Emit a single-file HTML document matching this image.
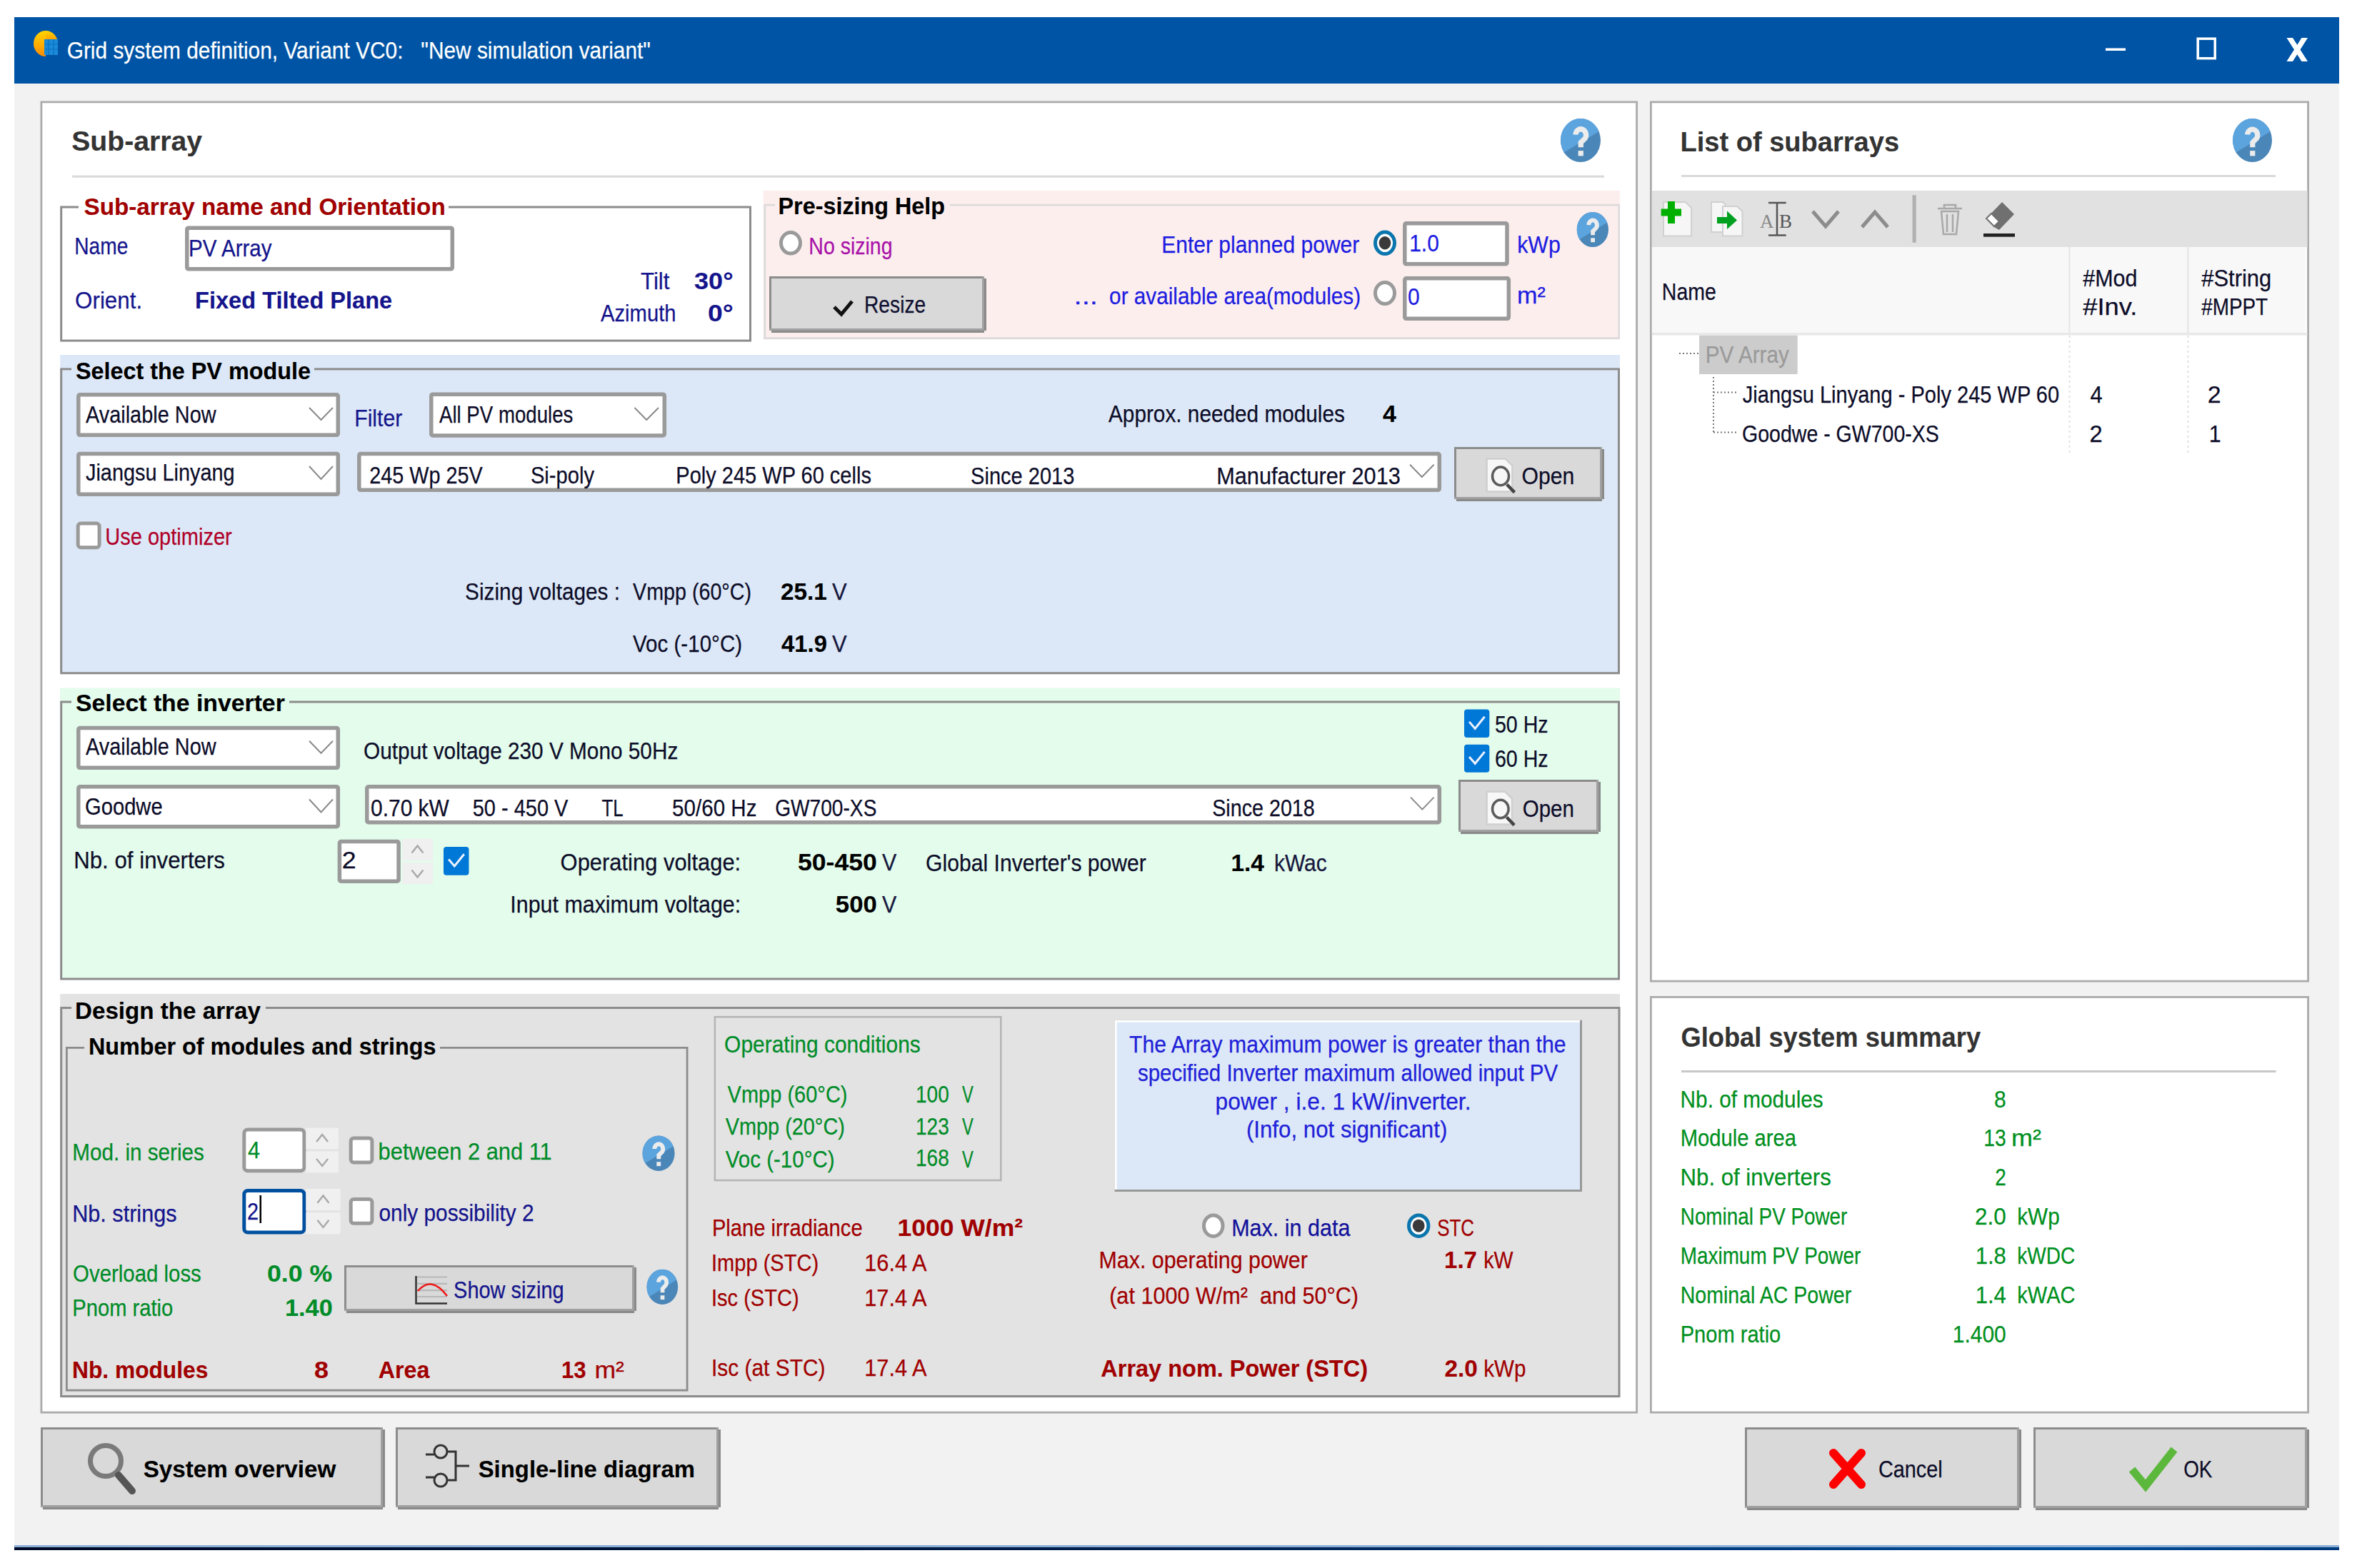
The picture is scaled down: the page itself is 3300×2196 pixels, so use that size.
<!DOCTYPE html>
<html><head><meta charset="utf-8"><title>Grid system definition</title>
<style>
html,body{margin:0;padding:0;background:#fff;width:3300px;height:2196px;overflow:hidden}
svg{display:block}
text{font-family:"Liberation Sans",sans-serif;white-space:pre}
</style></head><body>
<svg width="3300" height="2196" viewBox="0 0 3300 2196">
<rect x="0.0" y="0.0" width="3300.0" height="2196.0" rx="0" fill="#ffffff" />
<rect x="20.0" y="24.0" width="3255.0" height="2142.0" rx="0" fill="#f2f2f2" />
<defs><linearGradient id="bg1" x1="0" y1="0" x2="1" y2="0"><stop offset="0" stop-color="#000a28"/><stop offset="0.5" stop-color="#00204f"/><stop offset="0.88" stop-color="#004c98"/><stop offset="1" stop-color="#003a7a"/></linearGradient></defs>
<rect x="20.0" y="2164.0" width="3255.0" height="3.0" rx="0" fill="#8aaed6" />
<rect x="20.0" y="2167.0" width="3255.0" height="4.0" rx="0" fill="url(#bg1)" />
<rect x="20.0" y="24.0" width="3255.0" height="93.0" rx="0" fill="#0054a5" />
<defs><linearGradient id="ig" x1="0" y1="0" x2="0" y2="1"><stop offset="0" stop-color="#ffd400"/><stop offset="1" stop-color="#ff8c00"/></linearGradient></defs>
<path d="M 64 43 A 17 18 0 1 0 64 79 L 64 61 Z" fill="url(#ig)"/>
<path d="M 64 43 A 17 18 0 0 1 81 61 L 64 61 Z" fill="url(#ig)"/>
<rect x="62" y="55" width="19" height="22" fill="#1a8ad8"/>
<path d="M62 62 H81 M62 69 H81 M68 55 V77 M75 55 V77" stroke="#0a70c0" stroke-width="1.2"/>
<text x="93.7" y="82.0" font-size="34" fill="#ffffff" stroke="#ffffff" stroke-width="0.25" textLength="817.2" lengthAdjust="spacingAndGlyphs">Grid system definition, Variant VC0:   &quot;New simulation variant&quot;</text>
<rect x="2948.0" y="67.5" width="28.0" height="3.5" rx="0" fill="#fff" />
<rect x="3077.2" y="54.2" width="24.0" height="27.5" rx="0" fill="none" stroke="#fff" stroke-width="3.5" />
<path d="M3201.5 53 H3210 L3231 86 H3222.5 Z M3222.5 53 H3231 L3210 86 H3201.5 Z" fill="#fff"/>
<rect x="57.9" y="142.9" width="2233.7" height="1835.2" rx="0" fill="#fff" stroke="#ababab" stroke-width="2.8" />
<text x="100.2" y="211.4" font-size="38" fill="#333333" stroke="#333333" stroke-width="0.15" font-weight="bold" textLength="182.8" lengthAdjust="spacingAndGlyphs">Sub-array</text>
<g><clipPath id="hc2185_166"><ellipse cx="2213.0" cy="196.5" rx="28.0" ry="30.5"/></clipPath><ellipse cx="2213.0" cy="196.5" rx="28.0" ry="30.5" fill="#4a86b8"/><polygon clip-path="url(#hc2185_166)" points="2185,166 2241,166 2241,182.775 2185,216.325" fill="#5ca4de"/></g>
<path d="M 2206.0 188.7 A 7.3 8.3 0 1 1 2219.3 193.8 L 2213.3 199.6 L 2213.3 206.3" fill="none" stroke="#ececec" stroke-width="7.3"/>
<rect x="2209.6" y="211.1" width="7.3" height="7.3" fill="#ececec"/>
<rect x="101.0" y="245.6" width="2145.0" height="3.1" rx="0" fill="#d9d9d9" />
<rect x="85.7" y="290.0" width="964.8" height="187.1" rx="0" fill="none" stroke="#8c8c8c" stroke-width="3" />
<rect x="110.0" y="287.5" width="518.0" height="5.0" rx="0" fill="#fff" />
<text x="117.5" y="301.0" font-size="34" fill="#a00000" stroke="#a00000" stroke-width="0.15" font-weight="bold" textLength="506.2" lengthAdjust="spacingAndGlyphs">Sub-array name and Orientation</text>
<text x="104.3" y="355.7" font-size="34" fill="#14148c" stroke="#14148c" stroke-width="0.25" textLength="75.0" lengthAdjust="spacingAndGlyphs">Name</text>
<rect x="261.8" y="319.2" width="371.5" height="57.6" rx="2" fill="#fff" stroke="#9a9a9a" stroke-width="5.5" />
<text x="264.0" y="358.6" font-size="34" fill="#14148c" stroke="#14148c" stroke-width="0.25" textLength="116.5" lengthAdjust="spacingAndGlyphs">PV Array</text>
<text x="105.1" y="432.0" font-size="34" fill="#14148c" stroke="#14148c" stroke-width="0.25" textLength="94.0" lengthAdjust="spacingAndGlyphs">Orient.</text>
<text x="273.1" y="431.6" font-size="34" fill="#14148c" stroke="#14148c" stroke-width="0.15" font-weight="bold" textLength="276.1" lengthAdjust="spacingAndGlyphs">Fixed Tilted Plane</text>
<text x="897.0" y="404.7" font-size="34" fill="#14148c" stroke="#14148c" stroke-width="0.25" textLength="40.5" lengthAdjust="spacingAndGlyphs">Tilt</text>
<text x="972.0" y="404.7" font-size="34" fill="#14148c" stroke="#14148c" stroke-width="0.15" font-weight="bold" textLength="54.6" lengthAdjust="spacingAndGlyphs">30°</text>
<text x="841.0" y="450.0" font-size="34" fill="#14148c" stroke="#14148c" stroke-width="0.25" textLength="105.6" lengthAdjust="spacingAndGlyphs">Azimuth</text>
<text x="990.9" y="450.0" font-size="34" fill="#14148c" stroke="#14148c" stroke-width="0.15" font-weight="bold" textLength="35.8" lengthAdjust="spacingAndGlyphs">0°</text>
<rect x="1068.5" y="267.0" width="1199.5" height="208.5" rx="0" fill="#fdeeee" />
<rect x="1070.8" y="287.2" width="1195.9" height="186.5" rx="0" fill="none" stroke="#dadada" stroke-width="2.6" />
<rect x="1085.0" y="284.9" width="245.0" height="4.6" rx="0" fill="#fdeeee" />
<text x="1089.5" y="300.3" font-size="34" fill="#000" stroke="#000" stroke-width="0.15" font-weight="bold" textLength="233.6" lengthAdjust="spacingAndGlyphs">Pre-sizing Help</text>
<ellipse cx="1107.0" cy="340.3" rx="13.5" ry="14.800000000000011" fill="#fff" stroke="#9a9a9a" stroke-width="5"/>
<text x="1132.3" y="355.5" font-size="34" fill="#a812a8" stroke="#a812a8" stroke-width="0.25" textLength="117.3" lengthAdjust="spacingAndGlyphs">No sizing</text>
<rect x="1378.0" y="390.0" width="3.0" height="73.0" rx="0" fill="#8a8a8a" />
<rect x="1080.0" y="463.0" width="298.0" height="3.0" rx="0" fill="#8a8a8a" />
<rect x="1077.0" y="387.0" width="301.0" height="76.0" rx="0" fill="#a0a0a0" />
<rect x="1077.0" y="387.0" width="298.0" height="73.0" rx="0" fill="#8c8c8c" />
<rect x="1080.0" y="390.0" width="295.0" height="70.0" rx="0" fill="#d9d9d9" />
<path d="M1168 430 L1178 440 L1193 422" fill="none" stroke="#111" stroke-width="5"/>
<text x="1210.0" y="438.0" font-size="34" fill="#101030" stroke="#101030" stroke-width="0.25" textLength="86.2" lengthAdjust="spacingAndGlyphs">Resize</text>
<text x="1626.2" y="354.0" font-size="34" fill="#1c1ce0" stroke="#1c1ce0" stroke-width="0.25" textLength="277.1" lengthAdjust="spacingAndGlyphs">Enter planned power</text>
<ellipse cx="1939.0" cy="340.3" rx="13.5" ry="15.199999999999989" fill="#fff" stroke="#0b76ad" stroke-width="5"/>
<ellipse cx="1939.0" cy="340.3" rx="8.32" ry="9.203999999999994" fill="#3a3a3a"/>
<rect x="1966.8" y="312.8" width="143.2" height="57.0" rx="2" fill="#fff" stroke="#9a9a9a" stroke-width="5.5" />
<text x="1973.2" y="352.0" font-size="34" fill="#1c1ce0" stroke="#1c1ce0" stroke-width="0.25" textLength="41.6" lengthAdjust="spacingAndGlyphs">1.0</text>
<text x="2124.2" y="354.0" font-size="34" fill="#1c1ce0" stroke="#1c1ce0" stroke-width="0.25" textLength="60.6" lengthAdjust="spacingAndGlyphs">kWp</text>
<g><clipPath id="hc2207_297"><ellipse cx="2229.85" cy="321.5" rx="22.15000000000009" ry="24.5"/></clipPath><ellipse cx="2229.85" cy="321.5" rx="22.15000000000009" ry="24.5" fill="#4a86b8"/><polygon clip-path="url(#hc2207_297)" points="2207.7,297 2252,297 2252,310.475 2207.7,337.425" fill="#5ca4de"/></g>
<path d="M 2224.3 315.1 A 5.8 6.8 0 1 1 2234.8 319.2 L 2230.1 323.9 L 2230.1 329.3" fill="none" stroke="#ececec" stroke-width="5.8"/>
<rect x="2227.2" y="333.3" width="5.8" height="5.9" fill="#ececec"/>
<text x="1503.5" y="425.5" font-size="34" fill="#1c1ce0" stroke="#1c1ce0" stroke-width="0.25" textLength="33.4" lengthAdjust="spacingAndGlyphs">...</text>
<text x="1553.1" y="425.5" font-size="34" fill="#1c1ce0" stroke="#1c1ce0" stroke-width="0.25" textLength="352.0" lengthAdjust="spacingAndGlyphs">or available area(modules)</text>
<ellipse cx="1939.0" cy="410.5" rx="13.5" ry="15.0" fill="#fff" stroke="#9a9a9a" stroke-width="5"/>
<rect x="1966.8" y="389.8" width="145.5" height="56.5" rx="2" fill="#fff" stroke="#9a9a9a" stroke-width="5.5" />
<text x="1971.1" y="427.0" font-size="34" fill="#1c1ce0" stroke="#1c1ce0" stroke-width="0.25" textLength="16.7" lengthAdjust="spacingAndGlyphs">0</text>
<text x="2124.0" y="425.0" font-size="34" fill="#1c1ce0" stroke="#1c1ce0" stroke-width="0.25" textLength="39.9" lengthAdjust="spacingAndGlyphs">m²</text>
<rect x="84.2" y="497.0" width="2183.8" height="444.5" rx="0" fill="#dce8f7" />
<rect x="85.7" y="516.9" width="2180.8" height="425.8" rx="0" fill="none" stroke="#8c8c8c" stroke-width="3" />
<rect x="100.0" y="514.4" width="340.0" height="5.0" rx="0" fill="#dce8f7" />
<text x="106.0" y="530.5" font-size="34" fill="#000" stroke="#000" stroke-width="0.15" font-weight="bold" textLength="328.9" lengthAdjust="spacingAndGlyphs">Select the PV module</text>
<rect x="109.8" y="552.8" width="363.5" height="56.5" rx="2" fill="#fff" stroke="#9a9a9a" stroke-width="5.5" />
<polyline points="433,571 449.5,588 466,571" fill="none" stroke="#8a8a8a" stroke-width="2"/>
<text x="120.0" y="592.0" font-size="34" fill="#0c0c28" stroke="#0c0c28" stroke-width="0.25" textLength="182.6" lengthAdjust="spacingAndGlyphs">Available Now</text>
<text x="496.2" y="597.0" font-size="34" fill="#14148c" stroke="#14148c" stroke-width="0.25" textLength="67.1" lengthAdjust="spacingAndGlyphs">Filter</text>
<rect x="603.8" y="552.2" width="326.5" height="57.8" rx="2" fill="#fff" stroke="#9a9a9a" stroke-width="5.5" />
<polyline points="888.5,571 905.25,588 922,571" fill="none" stroke="#8a8a8a" stroke-width="2"/>
<text x="615.0" y="592.0" font-size="34" fill="#0c0c28" stroke="#0c0c28" stroke-width="0.25" textLength="187.3" lengthAdjust="spacingAndGlyphs">All PV modules</text>
<text x="1552.0" y="591.0" font-size="34" fill="#0c0c28" stroke="#0c0c28" stroke-width="0.25" textLength="330.9" lengthAdjust="spacingAndGlyphs">Approx. needed modules</text>
<text x="1936.0" y="591.0" font-size="34" fill="#000" stroke="#000" stroke-width="0.15" font-weight="bold" textLength="18.9" lengthAdjust="spacingAndGlyphs">4</text>
<rect x="109.8" y="635.4" width="363.5" height="56.9" rx="2" fill="#fff" stroke="#9a9a9a" stroke-width="5.5" />
<polyline points="433,653 449.5,671 466,653" fill="none" stroke="#8a8a8a" stroke-width="2"/>
<text x="120.0" y="673.3" font-size="34" fill="#0c0c28" stroke="#0c0c28" stroke-width="0.25" textLength="208.6" lengthAdjust="spacingAndGlyphs">Jiangsu Linyang</text>
<rect x="502.8" y="635.5" width="1512.5" height="50.8" rx="2" fill="#fff" stroke="#9a9a9a" stroke-width="5.5" />
<polyline points="1974,650.7 1990.8,668 2007.6,650.7" fill="none" stroke="#8a8a8a" stroke-width="2"/>
<text x="517.2" y="677.0" font-size="34" fill="#0c0c28" stroke="#0c0c28" stroke-width="0.25" textLength="158.6" lengthAdjust="spacingAndGlyphs">245 Wp 25V</text>
<text x="742.9" y="677.0" font-size="34" fill="#0c0c28" stroke="#0c0c28" stroke-width="0.25" textLength="89.1" lengthAdjust="spacingAndGlyphs">Si-poly</text>
<text x="946.3" y="677.0" font-size="34" fill="#0c0c28" stroke="#0c0c28" stroke-width="0.25" textLength="273.6" lengthAdjust="spacingAndGlyphs">Poly 245 WP 60 cells</text>
<text x="1359.1" y="677.6" font-size="34" fill="#0c0c28" stroke="#0c0c28" stroke-width="0.25" textLength="145.3" lengthAdjust="spacingAndGlyphs">Since 2013</text>
<text x="1703.2" y="677.6" font-size="34" fill="#0c0c28" stroke="#0c0c28" stroke-width="0.25" textLength="257.6" lengthAdjust="spacingAndGlyphs">Manufacturer 2013</text>
<rect x="2243.0" y="629.0" width="3.0" height="70.0" rx="0" fill="#8a8a8a" />
<rect x="2039.0" y="699.0" width="204.0" height="3.0" rx="0" fill="#8a8a8a" />
<rect x="2036.0" y="626.0" width="207.0" height="73.0" rx="0" fill="#a0a0a0" />
<rect x="2036.0" y="626.0" width="204.0" height="70.0" rx="0" fill="#8c8c8c" />
<rect x="2039.0" y="629.0" width="201.0" height="67.0" rx="0" fill="#d9d9d9" />
<path d="M 2081.6 642.4 H 2107.6 L 2117.4 652.2 V 688.4 H 2081.6 Z" fill="#f7f7f7" stroke="#cfcfcf" stroke-width="2.5"/>
<ellipse cx="2101.0" cy="666.9" rx="11.5" ry="12.8" fill="none" stroke="#5c5c5c" stroke-width="3.5"/>
<line x1="2109.8" y1="678.5" x2="2120.5" y2="689.6" stroke="#444" stroke-width="4.5"/>
<text x="2130.6" y="677.6" font-size="34" fill="#0c0c28" stroke="#0c0c28" stroke-width="0.25" textLength="73.8" lengthAdjust="spacingAndGlyphs">Open</text>
<rect x="109.2" y="733.0" width="29.9" height="33.7" rx="4" fill="#fff" stroke="#9a9a9a" stroke-width="5" />
<text x="147.3" y="763.0" font-size="34" fill="#b00028" stroke="#b00028" stroke-width="0.25" textLength="177.4" lengthAdjust="spacingAndGlyphs">Use optimizer</text>
<text x="651.1" y="840.0" font-size="34" fill="#0c0c28" stroke="#0c0c28" stroke-width="0.25" textLength="217.0" lengthAdjust="spacingAndGlyphs">Sizing voltages :</text>
<text x="886.0" y="840.0" font-size="34" fill="#0c0c28" stroke="#0c0c28" stroke-width="0.25" textLength="166.1" lengthAdjust="spacingAndGlyphs">Vmpp (60°C)</text>
<text x="1093.0" y="840.0" font-size="34" fill="#000" stroke="#000" stroke-width="0.15" font-weight="bold" textLength="64.9" lengthAdjust="spacingAndGlyphs">25.1</text>
<text x="1165.0" y="840.0" font-size="34" fill="#16163c" stroke="#16163c" stroke-width="0.25" textLength="20.7" lengthAdjust="spacingAndGlyphs">V</text>
<text x="886.0" y="913.0" font-size="34" fill="#0c0c28" stroke="#0c0c28" stroke-width="0.25" textLength="153.1" lengthAdjust="spacingAndGlyphs">Voc (-10°C)</text>
<text x="1094.0" y="913.0" font-size="34" fill="#000" stroke="#000" stroke-width="0.15" font-weight="bold" textLength="63.9" lengthAdjust="spacingAndGlyphs">41.9</text>
<text x="1165.0" y="913.0" font-size="34" fill="#16163c" stroke="#16163c" stroke-width="0.25" textLength="20.7" lengthAdjust="spacingAndGlyphs">V</text>
<rect x="84.2" y="963.5" width="2183.8" height="406.5" rx="0" fill="#e3fcec" />
<rect x="85.7" y="983.0" width="2180.8" height="388.0" rx="0" fill="none" stroke="#8c8c8c" stroke-width="3" />
<rect x="100.0" y="980.5" width="305.0" height="5.0" rx="0" fill="#e3fcec" />
<text x="106.0" y="996.0" font-size="34" fill="#000" stroke="#000" stroke-width="0.15" font-weight="bold" textLength="292.8" lengthAdjust="spacingAndGlyphs">Select the inverter</text>
<rect x="109.8" y="1019.5" width="363.5" height="55.8" rx="2" fill="#fff" stroke="#9a9a9a" stroke-width="5.5" />
<polyline points="433,1037.7 449.5,1054.7 466,1037.7" fill="none" stroke="#8a8a8a" stroke-width="2"/>
<text x="120.0" y="1057.4" font-size="34" fill="#0c0c28" stroke="#0c0c28" stroke-width="0.25" textLength="182.6" lengthAdjust="spacingAndGlyphs">Available Now</text>
<text x="509.1" y="1062.8" font-size="34" fill="#0c0c28" stroke="#0c0c28" stroke-width="0.25" textLength="440.2" lengthAdjust="spacingAndGlyphs">Output voltage 230 V Mono 50Hz</text>
<rect x="2050.0" y="993.6" width="35.3" height="39.4" rx="4" fill="#0078d7" />
<polyline points="2057.1,1010.9 2065.2,1020.4 2078.6,1003.8" fill="none" stroke="#eef2ff" stroke-width="3"/>
<text x="2092.9" y="1025.8" font-size="34" fill="#0c0c28" stroke="#0c0c28" stroke-width="0.25" textLength="74.7" lengthAdjust="spacingAndGlyphs">50 Hz</text>
<rect x="2050.0" y="1042.8" width="35.3" height="39.0" rx="4" fill="#0078d7" />
<polyline points="2057.1,1060.0 2065.2,1069.3 2078.6,1052.9" fill="none" stroke="#eef2ff" stroke-width="3"/>
<text x="2092.9" y="1074.2" font-size="34" fill="#0c0c28" stroke="#0c0c28" stroke-width="0.25" textLength="74.7" lengthAdjust="spacingAndGlyphs">60 Hz</text>
<rect x="109.8" y="1101.8" width="363.5" height="55.9" rx="2" fill="#fff" stroke="#9a9a9a" stroke-width="5.5" />
<polyline points="433,1119.5 449.5,1137.5 466,1119.5" fill="none" stroke="#8a8a8a" stroke-width="2"/>
<text x="119.1" y="1141.0" font-size="34" fill="#0c0c28" stroke="#0c0c28" stroke-width="0.25" textLength="108.5" lengthAdjust="spacingAndGlyphs">Goodwe</text>
<rect x="513.8" y="1101.8" width="1501.5" height="49.9" rx="2" fill="#fff" stroke="#9a9a9a" stroke-width="5.5" />
<polyline points="1975,1116.6 1991.3,1133.6 2007.6,1116.6" fill="none" stroke="#8a8a8a" stroke-width="2"/>
<text x="519.1" y="1142.6" font-size="34" fill="#0c0c28" stroke="#0c0c28" stroke-width="0.25" textLength="109.7" lengthAdjust="spacingAndGlyphs">0.70 kW</text>
<text x="661.7" y="1142.6" font-size="34" fill="#0c0c28" stroke="#0c0c28" stroke-width="0.25" textLength="133.7" lengthAdjust="spacingAndGlyphs">50 - 450 V</text>
<text x="842.5" y="1142.6" font-size="34" fill="#0c0c28" stroke="#0c0c28" stroke-width="0.25" textLength="30.2" lengthAdjust="spacingAndGlyphs">TL</text>
<text x="941.1" y="1142.6" font-size="34" fill="#0c0c28" stroke="#0c0c28" stroke-width="0.25" textLength="118.4" lengthAdjust="spacingAndGlyphs">50/60 Hz</text>
<text x="1085.2" y="1142.6" font-size="34" fill="#0c0c28" stroke="#0c0c28" stroke-width="0.25" textLength="142.2" lengthAdjust="spacingAndGlyphs">GW700-XS</text>
<text x="1697.2" y="1142.5" font-size="34" fill="#0c0c28" stroke="#0c0c28" stroke-width="0.25" textLength="143.6" lengthAdjust="spacingAndGlyphs">Since 2018</text>
<rect x="2238.0" y="1095.0" width="3.0" height="70.0" rx="0" fill="#8a8a8a" />
<rect x="2045.0" y="1165.0" width="193.0" height="3.0" rx="0" fill="#8a8a8a" />
<rect x="2042.0" y="1092.0" width="196.0" height="73.0" rx="0" fill="#a0a0a0" />
<rect x="2042.0" y="1092.0" width="193.0" height="70.0" rx="0" fill="#8c8c8c" />
<rect x="2045.0" y="1095.0" width="190.0" height="67.0" rx="0" fill="#d9d9d9" />
<path d="M 2081.6 1108.7 H 2107.2 L 2117.0 1118.5 V 1154.4 H 2081.6 Z" fill="#f7f7f7" stroke="#cfcfcf" stroke-width="2.5"/>
<ellipse cx="2100.8" cy="1133.0" rx="11.3" ry="12.7" fill="none" stroke="#5c5c5c" stroke-width="3.5"/>
<line x1="2109.5" y1="1144.5" x2="2120.1" y2="1155.6" stroke="#444" stroke-width="4.5"/>
<text x="2131.8" y="1143.5" font-size="34" fill="#0c0c28" stroke="#0c0c28" stroke-width="0.25" textLength="72.1" lengthAdjust="spacingAndGlyphs">Open</text>
<text x="103.2" y="1216.0" font-size="34" fill="#0c0c28" stroke="#0c0c28" stroke-width="0.25" textLength="211.8" lengthAdjust="spacingAndGlyphs">Nb. of inverters</text>
<rect x="475.4" y="1178.5" width="82.7" height="55.7" rx="2" fill="#fff" stroke="#9a9a9a" stroke-width="5.5" />
<text x="478.7" y="1216.0" font-size="34" fill="#0c0c28" stroke="#0c0c28" stroke-width="0.25" textLength="19.9" lengthAdjust="spacingAndGlyphs">2</text>
<rect x="563.0" y="1175.0" width="43.0" height="30.0" rx="0" fill="#f0f0f0" />
<rect x="563.0" y="1208.0" width="43.0" height="30.0" rx="0" fill="#f0f0f0" />
<polyline points="576.5,1194.5 584.5,1184.5 592.5,1194.5" fill="none" stroke="#a8a8a8" stroke-width="2.4"/>
<polyline points="576.5,1218.5 584.5,1228.5 592.5,1218.5" fill="none" stroke="#a8a8a8" stroke-width="2.4"/>
<rect x="621.0" y="1186.0" width="35.5" height="39.7" rx="4" fill="#0078d7" />
<polyline points="628.1,1203.5 636.3,1213.0 649.8,1196.3" fill="none" stroke="#eef2ff" stroke-width="3"/>
<text x="784.6" y="1219.0" font-size="34" fill="#0c0c28" stroke="#0c0c28" stroke-width="0.25" textLength="252.6" lengthAdjust="spacingAndGlyphs">Operating voltage:</text>
<text x="1117.0" y="1219.0" font-size="34" fill="#000" stroke="#000" stroke-width="0.15" font-weight="bold" textLength="110.8" lengthAdjust="spacingAndGlyphs">50-450</text>
<text x="1235.0" y="1219.0" font-size="34" fill="#16163c" stroke="#16163c" stroke-width="0.25" textLength="20.3" lengthAdjust="spacingAndGlyphs">V</text>
<text x="1296.1" y="1219.7" font-size="34" fill="#0c0c28" stroke="#0c0c28" stroke-width="0.25" textLength="308.8" lengthAdjust="spacingAndGlyphs">Global Inverter&#x27;s power</text>
<text x="1723.5" y="1219.7" font-size="34" fill="#000" stroke="#000" stroke-width="0.15" font-weight="bold" textLength="46.4" lengthAdjust="spacingAndGlyphs">1.4</text>
<text x="1783.9" y="1219.7" font-size="34" fill="#16163c" stroke="#16163c" stroke-width="0.25" textLength="73.9" lengthAdjust="spacingAndGlyphs">kWac</text>
<text x="714.3" y="1277.7" font-size="34" fill="#0c0c28" stroke="#0c0c28" stroke-width="0.25" textLength="322.9" lengthAdjust="spacingAndGlyphs">Input maximum voltage:</text>
<text x="1169.8" y="1277.7" font-size="34" fill="#000" stroke="#000" stroke-width="0.15" font-weight="bold" textLength="58.0" lengthAdjust="spacingAndGlyphs">500</text>
<text x="1235.0" y="1277.7" font-size="34" fill="#16163c" stroke="#16163c" stroke-width="0.25" textLength="20.3" lengthAdjust="spacingAndGlyphs">V</text>
<rect x="84.2" y="1392.0" width="2183.8" height="565.5" rx="0" fill="#e3e3e3" />
<rect x="85.7" y="1411.5" width="2181.3" height="544.0" rx="0" fill="none" stroke="#8c8c8c" stroke-width="3" />
<rect x="100.0" y="1409.0" width="272.0" height="5.0" rx="0" fill="#e3e3e3" />
<text x="105.0" y="1427.0" font-size="34" fill="#000" stroke="#000" stroke-width="0.15" font-weight="bold" textLength="259.9" lengthAdjust="spacingAndGlyphs">Design the array</text>
<rect x="93.4" y="1467.4" width="868.7" height="479.7" rx="0" fill="none" stroke="#8c8c8c" stroke-width="2.8" />
<rect x="118.0" y="1465.0" width="498.0" height="4.8" rx="0" fill="#e3e3e3" />
<text x="123.9" y="1477.0" font-size="34" fill="#000" stroke="#000" stroke-width="0.15" font-weight="bold" textLength="486.6" lengthAdjust="spacingAndGlyphs">Number of modules and strings</text>
<text x="101.3" y="1624.5" font-size="34" fill="#008c28" stroke="#008c28" stroke-width="0.25" textLength="184.6" lengthAdjust="spacingAndGlyphs">Mod. in series</text>
<rect x="341.8" y="1582.1" width="84.1" height="57.7" rx="5" fill="#fff" stroke="#9a9a9a" stroke-width="5" />
<text x="347.0" y="1621.5" font-size="34" fill="#008c28" stroke="#008c28" stroke-width="0.25" textLength="17.1" lengthAdjust="spacingAndGlyphs">4</text>
<rect x="428.4" y="1579.6" width="45.4" height="29.8" rx="0" fill="#f0f0f0" />
<rect x="428.4" y="1612.4" width="45.4" height="29.9" rx="0" fill="#f0f0f0" />
<polyline points="443.1,1599.0 451.1,1589.0 459.1,1599.0" fill="none" stroke="#a8a8a8" stroke-width="2.4"/>
<polyline points="443.1,1622.9 451.1,1632.9 459.1,1622.9" fill="none" stroke="#a8a8a8" stroke-width="2.4"/>
<rect x="491.2" y="1593.9" width="29.7" height="34.1" rx="4" fill="#fff" stroke="#9a9a9a" stroke-width="5" />
<text x="529.6" y="1623.5" font-size="34" fill="#008c28" stroke="#008c28" stroke-width="0.25" textLength="243.2" lengthAdjust="spacingAndGlyphs">between 2 and 11</text>
<g><clipPath id="hc899_1590"><ellipse cx="922.05" cy="1615.3" rx="22.55000000000001" ry="24.700000000000045"/></clipPath><ellipse cx="922.05" cy="1615.3" rx="22.55000000000001" ry="24.700000000000045" fill="#4a86b8"/><polygon clip-path="url(#hc899_1590)" points="899.5,1590.6 944.6,1590.6 944.6,1604.185 899.5,1631.355" fill="#5ca4de"/></g>
<path d="M 916.4 1609.0 A 5.9 6.9 0 1 1 927.1 1613.1 L 922.3 1617.8 L 922.3 1623.2" fill="none" stroke="#ececec" stroke-width="5.9"/>
<rect x="919.3" y="1627.2" width="5.9" height="5.9" fill="#ececec"/>
<text x="101.2" y="1710.6" font-size="34" fill="#14148c" stroke="#14148c" stroke-width="0.25" textLength="146.3" lengthAdjust="spacingAndGlyphs">Nb. strings</text>
<rect x="341.8" y="1667.5" width="84.1" height="58.4" rx="5" fill="#fff" stroke="#0050a0" stroke-width="5" />
<text x="346.1" y="1708.0" font-size="34" fill="#14148c" stroke="#14148c" stroke-width="0.25" textLength="16.1" lengthAdjust="spacingAndGlyphs">2</text>
<rect x="363.5" y="1674.0" width="2.5" height="39.0" rx="0" fill="#000" />
<rect x="428.4" y="1665.0" width="48.1" height="30.2" rx="0" fill="#f0f0f0" />
<rect x="428.4" y="1698.2" width="48.1" height="30.2" rx="0" fill="#f0f0f0" />
<polyline points="444.45,1684.7 452.45,1674.5 460.45,1684.7" fill="none" stroke="#a8a8a8" stroke-width="2.4"/>
<polyline points="444.45,1708.7 452.45,1718.9 460.45,1708.7" fill="none" stroke="#a8a8a8" stroke-width="2.4"/>
<rect x="491.2" y="1679.5" width="29.7" height="33.8" rx="4" fill="#fff" stroke="#9a9a9a" stroke-width="5" />
<text x="530.5" y="1709.5" font-size="34" fill="#14148c" stroke="#14148c" stroke-width="0.25" textLength="217.1" lengthAdjust="spacingAndGlyphs">only possibility 2</text>
<text x="102.1" y="1795.0" font-size="34" fill="#008c28" stroke="#008c28" stroke-width="0.25" textLength="179.7" lengthAdjust="spacingAndGlyphs">Overload loss</text>
<text x="374.0" y="1795.0" font-size="34" fill="#008c28" stroke="#008c28" stroke-width="0.15" font-weight="bold" textLength="91.1" lengthAdjust="spacingAndGlyphs">0.0 %</text>
<text x="101.3" y="1843.4" font-size="34" fill="#008c28" stroke="#008c28" stroke-width="0.25" textLength="141.0" lengthAdjust="spacingAndGlyphs">Pnom ratio</text>
<text x="399.0" y="1843.4" font-size="34" fill="#008c28" stroke="#008c28" stroke-width="0.15" font-weight="bold" textLength="66.7" lengthAdjust="spacingAndGlyphs">1.40</text>
<rect x="888.0" y="1775.0" width="3.0" height="61.0" rx="0" fill="#8a8a8a" />
<rect x="485.0" y="1836.0" width="403.0" height="3.0" rx="0" fill="#8a8a8a" />
<rect x="482.0" y="1772.0" width="406.0" height="64.0" rx="0" fill="#a0a0a0" />
<rect x="482.0" y="1772.0" width="403.0" height="61.0" rx="0" fill="#8c8c8c" />
<rect x="485.0" y="1775.0" width="400.0" height="58.0" rx="0" fill="#d9d9d9" />
<path d="M584 1788.5 H626 M584 1797.8 H626 M584 1807.2 H626 M584 1816 H626" stroke="#b8b8b8" stroke-width="2.2"/>
<path d="M582.5 1787 V1825.5 H626" fill="none" stroke="#333" stroke-width="2.5"/>
<path d="M585 1808 Q604 1786 626 1815" fill="none" stroke="#f01818" stroke-width="2.5"/>
<text x="635.1" y="1818.0" font-size="34" fill="#14148c" stroke="#14148c" stroke-width="0.25" textLength="154.5" lengthAdjust="spacingAndGlyphs">Show sizing</text>
<g><clipPath id="hc905_1777"><ellipse cx="927.35" cy="1802.35" rx="21.850000000000023" ry="24.649999999999977"/></clipPath><ellipse cx="927.35" cy="1802.35" rx="21.850000000000023" ry="24.649999999999977" fill="#4a86b8"/><polygon clip-path="url(#hc905_1777)" points="905.5,1777.7 949.2,1777.7 949.2,1791.2575 905.5,1818.3725" fill="#5ca4de"/></g>
<path d="M 921.9 1795.7 A 5.7 6.7 0 1 1 932.3 1799.7 L 927.6 1804.8 L 927.6 1810.2" fill="none" stroke="#ececec" stroke-width="5.7"/>
<rect x="924.7" y="1814.2" width="5.7" height="5.9" fill="#ececec"/>
<text x="101.1" y="1930.4" font-size="34" fill="#a00000" stroke="#a00000" stroke-width="0.15" font-weight="bold" textLength="190.2" lengthAdjust="spacingAndGlyphs">Nb. modules</text>
<text x="439.9" y="1930.4" font-size="34" fill="#a00000" stroke="#a00000" stroke-width="0.15" font-weight="bold" textLength="20.0" lengthAdjust="spacingAndGlyphs">8</text>
<text x="529.8" y="1930.4" font-size="34" fill="#a00000" stroke="#a00000" stroke-width="0.15" font-weight="bold" textLength="71.6" lengthAdjust="spacingAndGlyphs">Area</text>
<text x="786.0" y="1930.4" font-size="34" fill="#a00000" stroke="#a00000" stroke-width="0.15" font-weight="bold" textLength="34.7" lengthAdjust="spacingAndGlyphs">13</text>
<text x="832.4" y="1930.4" font-size="34" fill="#a00000" stroke="#a00000" stroke-width="0.25" textLength="41.5" lengthAdjust="spacingAndGlyphs">m²</text>
<rect x="1000.9" y="1424.2" width="400.4" height="228.8" rx="0" fill="none" stroke="#b4b4b4" stroke-width="2.5" />
<text x="1014.1" y="1474.3" font-size="34" fill="#008c28" stroke="#008c28" stroke-width="0.25" textLength="274.7" lengthAdjust="spacingAndGlyphs">Operating conditions</text>
<text x="1018.6" y="1543.6" font-size="34" fill="#008c28" stroke="#008c28" stroke-width="0.25" textLength="167.9" lengthAdjust="spacingAndGlyphs">Vmpp (60°C)</text>
<text x="1282.0" y="1543.6" font-size="34" fill="#008c28" stroke="#008c28" stroke-width="0.25" textLength="46.8" lengthAdjust="spacingAndGlyphs">100</text>
<text x="1347.0" y="1543.6" font-size="34" fill="#008c28" stroke="#008c28" stroke-width="0.25" textLength="15.8" lengthAdjust="spacingAndGlyphs">V</text>
<text x="1015.7" y="1589.3" font-size="34" fill="#008c28" stroke="#008c28" stroke-width="0.25" textLength="167.2" lengthAdjust="spacingAndGlyphs">Vmpp (20°C)</text>
<text x="1282.0" y="1589.3" font-size="34" fill="#008c28" stroke="#008c28" stroke-width="0.25" textLength="46.8" lengthAdjust="spacingAndGlyphs">123</text>
<text x="1347.0" y="1589.3" font-size="34" fill="#008c28" stroke="#008c28" stroke-width="0.25" textLength="15.8" lengthAdjust="spacingAndGlyphs">V</text>
<text x="1015.7" y="1635.0" font-size="34" fill="#008c28" stroke="#008c28" stroke-width="0.25" textLength="152.9" lengthAdjust="spacingAndGlyphs">Voc (-10°C)</text>
<text x="1282.0" y="1633.0" font-size="34" fill="#008c28" stroke="#008c28" stroke-width="0.25" textLength="46.8" lengthAdjust="spacingAndGlyphs">168</text>
<text x="1347.0" y="1635.0" font-size="34" fill="#008c28" stroke="#008c28" stroke-width="0.25" textLength="15.8" lengthAdjust="spacingAndGlyphs">V</text>
<text x="996.9" y="1731.4" font-size="34" fill="#a00000" stroke="#a00000" stroke-width="0.25" textLength="210.7" lengthAdjust="spacingAndGlyphs">Plane irradiance</text>
<text x="1256.5" y="1731.4" font-size="34" fill="#a00000" stroke="#a00000" stroke-width="0.15" font-weight="bold" textLength="175.6" lengthAdjust="spacingAndGlyphs">1000 W/m²</text>
<text x="996.0" y="1780.4" font-size="34" fill="#a00000" stroke="#a00000" stroke-width="0.25" textLength="150.1" lengthAdjust="spacingAndGlyphs">Impp (STC)</text>
<text x="1210.2" y="1780.4" font-size="34" fill="#a00000" stroke="#a00000" stroke-width="0.25" textLength="87.4" lengthAdjust="spacingAndGlyphs">16.4 A</text>
<text x="996.0" y="1828.6" font-size="34" fill="#a00000" stroke="#a00000" stroke-width="0.25" textLength="122.6" lengthAdjust="spacingAndGlyphs">Isc (STC)</text>
<text x="1210.2" y="1828.6" font-size="34" fill="#a00000" stroke="#a00000" stroke-width="0.25" textLength="87.4" lengthAdjust="spacingAndGlyphs">17.4 A</text>
<text x="996.0" y="1926.8" font-size="34" fill="#a00000" stroke="#a00000" stroke-width="0.25" textLength="159.5" lengthAdjust="spacingAndGlyphs">Isc (at STC)</text>
<text x="1210.2" y="1926.8" font-size="34" fill="#a00000" stroke="#a00000" stroke-width="0.25" textLength="87.4" lengthAdjust="spacingAndGlyphs">17.4 A</text>
<rect x="1560.6" y="1428.7" width="654.4" height="240.3" rx="0" fill="#999999" />
<rect x="1560.6" y="1428.7" width="651.4" height="237.3" rx="0" fill="#ffffff" />
<rect x="1563.6" y="1431.7" width="648.4" height="234.3" rx="0" fill="#dce8f7" />
<text x="1581.0" y="1473.9" font-size="34" fill="#2020d8" stroke="#2020d8" stroke-width="0.25" textLength="611.5" lengthAdjust="spacingAndGlyphs">The Array maximum power is greater than the</text>
<text x="1592.9" y="1513.8" font-size="34" fill="#2020d8" stroke="#2020d8" stroke-width="0.25" textLength="588.2" lengthAdjust="spacingAndGlyphs">specified Inverter maximum allowed input PV</text>
<text x="1701.6" y="1553.5" font-size="34" fill="#2020d8" stroke="#2020d8" stroke-width="0.25" textLength="357.9" lengthAdjust="spacingAndGlyphs">power , i.e. 1 kW/inverter.</text>
<text x="1744.9" y="1593.0" font-size="34" fill="#2020d8" stroke="#2020d8" stroke-width="0.25" textLength="281.4" lengthAdjust="spacingAndGlyphs">(Info, not significant)</text>
<ellipse cx="1698.75" cy="1716.7" rx="13.25" ry="14.799999999999955" fill="#fff" stroke="#9a9a9a" stroke-width="5"/>
<text x="1724.2" y="1731.0" font-size="34" fill="#10109a" stroke="#10109a" stroke-width="0.25" textLength="166.2" lengthAdjust="spacingAndGlyphs">Max. in data</text>
<ellipse cx="1986.2" cy="1716.7" rx="13.700000000000045" ry="14.799999999999955" fill="#fff" stroke="#0b76ad" stroke-width="5"/>
<ellipse cx="1986.2" cy="1716.7" rx="8.424000000000024" ry="8.995999999999977" fill="#3a3a3a"/>
<text x="2012.2" y="1731.0" font-size="34" fill="#a00000" stroke="#a00000" stroke-width="0.25" textLength="51.8" lengthAdjust="spacingAndGlyphs">STC</text>
<text x="1538.5" y="1776.0" font-size="34" fill="#a00000" stroke="#a00000" stroke-width="0.25" textLength="292.3" lengthAdjust="spacingAndGlyphs">Max. operating power</text>
<text x="2022.1" y="1776.0" font-size="34" fill="#a00000" stroke="#a00000" stroke-width="0.15" font-weight="bold" textLength="45.8" lengthAdjust="spacingAndGlyphs">1.7</text>
<text x="2077.3" y="1776.0" font-size="34" fill="#a00000" stroke="#a00000" stroke-width="0.25" textLength="41.3" lengthAdjust="spacingAndGlyphs">kW</text>
<text x="1553.2" y="1825.7" font-size="34" fill="#a00000" stroke="#a00000" stroke-width="0.25" textLength="348.8" lengthAdjust="spacingAndGlyphs">(at 1000 W/m²  and 50°C)</text>
<text x="1541.3" y="1927.6" font-size="34" fill="#a00000" stroke="#a00000" stroke-width="0.15" font-weight="bold" textLength="373.7" lengthAdjust="spacingAndGlyphs">Array nom. Power (STC)</text>
<text x="2022.4" y="1927.6" font-size="34" fill="#a00000" stroke="#a00000" stroke-width="0.15" font-weight="bold" textLength="46.3" lengthAdjust="spacingAndGlyphs">2.0</text>
<text x="2077.3" y="1927.6" font-size="34" fill="#a00000" stroke="#a00000" stroke-width="0.25" textLength="59.1" lengthAdjust="spacingAndGlyphs">kWp</text>
<rect x="2311.4" y="142.9" width="920.2" height="1231.2" rx="0" fill="#fff" stroke="#ababab" stroke-width="2.8" />
<text x="2352.5" y="212.0" font-size="38" fill="#333333" stroke="#333333" stroke-width="0.15" font-weight="bold" textLength="306.6" lengthAdjust="spacingAndGlyphs">List of subarrays</text>
<g><clipPath id="hc3126_166"><ellipse cx="3153.5" cy="196.5" rx="27.5" ry="30.5"/></clipPath><ellipse cx="3153.5" cy="196.5" rx="27.5" ry="30.5" fill="#4a86b8"/><polygon clip-path="url(#hc3126_166)" points="3126,166 3181,166 3181,182.775 3126,216.325" fill="#5ca4de"/></g>
<path d="M 3146.6 188.5 A 7.1 8.1 0 1 1 3159.7 193.5 L 3153.8 199.6 L 3153.8 206.3" fill="none" stroke="#ececec" stroke-width="7.2"/>
<rect x="3150.2" y="211.1" width="7.2" height="7.3" fill="#ececec"/>
<rect x="2354.0" y="245.0" width="832.0" height="3.0" rx="0" fill="#d9d9d9" />
<rect x="2312.8" y="267.0" width="917.7" height="79.0" rx="0" fill="#e1e1e1" />
<rect x="2312.8" y="346.0" width="915.2" height="120.0" rx="0" fill="#f8f8f8" />
<rect x="2312.8" y="466.0" width="917.7" height="3.5" rx="0" fill="#e8e8e8" />
<rect x="2896.3" y="346.0" width="2.2" height="120.0" rx="0" fill="#e6e6e6" />
<rect x="3062.3" y="346.0" width="2.2" height="120.0" rx="0" fill="#e6e6e6" />
<path d="M2329 283 H2360 L2368 291 V330.5 H2329 Z" fill="#f6f6f6" stroke="#d0d0d0" stroke-width="2"/>
<path d="M2340 282 V313 M2325.7 297.5 H2354" stroke="#00b000" stroke-width="10"/>
<path d="M2396 283 H2412 L2416 287 V325 H2396 Z" fill="#f6f6f6" stroke="#d0d0d0" stroke-width="2"/>
<path d="M2412 289 H2432 L2439.5 296 V330.5 H2412 Z" fill="#f6f6f6" stroke="#d0d0d0" stroke-width="2"/>
<path d="M2404 308.5 H2420" stroke="#00a020" stroke-width="9"/>
<path d="M2418 295.5 L2432 308.5 L2418 321 Z" fill="#00a020"/>
<text x="2464" y="319" font-size="27" fill="#888" style="font-family:Liberation Serif,serif">A</text>
<text x="2491" y="319" font-size="27" fill="#555" style="font-family:Liberation Serif,serif">B</text>
<path d="M2476 284 H2500.7 M2476 329.5 H2500.7 M2488 284 V329.5" stroke="#555" stroke-width="2.5"/>
<polyline points="2538,296 2556,317 2574,296" fill="none" stroke="#8c8c8c" stroke-width="5"/>
<polyline points="2607,318 2625,297 2643,318" fill="none" stroke="#8c8c8c" stroke-width="5"/>
<rect x="2677.6" y="273.3" width="5.1" height="66.5" rx="0" fill="#b0b0b0" />
<path d="M2713 292 H2747 M2722 292 V287 H2738 V292 M2718 296 L2721 328 H2739 L2742 296 Z M2726 300 V325 M2734 300 V325" fill="none" stroke="#a8a8a8" stroke-width="2.5"/>
<path d="M2792 318 L2781 306 L2803 283 L2820 300 L2799 322 Z" fill="#707070"/>
<path d="M2781 306 L2792 317 L2799 310 L2788 299 Z" fill="#fff" stroke="#707070" stroke-width="2"/>
<rect x="2777.0" y="327.0" width="44.0" height="4.7" rx="0" fill="#222" />
<text x="2326.8" y="419.9" font-size="34" fill="#0c0c28" stroke="#0c0c28" stroke-width="0.25" textLength="76.1" lengthAdjust="spacingAndGlyphs">Name</text>
<text x="2916.3" y="401.4" font-size="34" fill="#0c0c28" stroke="#0c0c28" stroke-width="0.25" textLength="76.2" lengthAdjust="spacingAndGlyphs">#Mod</text>
<text x="2916.3" y="441.2" font-size="34" fill="#0c0c28" stroke="#0c0c28" stroke-width="0.25" textLength="76.1" lengthAdjust="spacingAndGlyphs">#Inv.</text>
<text x="3082.2" y="401.4" font-size="34" fill="#0c0c28" stroke="#0c0c28" stroke-width="0.25" textLength="98.1" lengthAdjust="spacingAndGlyphs">#String</text>
<text x="3082.2" y="441.2" font-size="34" fill="#0c0c28" stroke="#0c0c28" stroke-width="0.25" textLength="92.9" lengthAdjust="spacingAndGlyphs">#MPPT</text>
<rect x="2379.0" y="469.7" width="137.7" height="54.3" rx="0" fill="#cccccc" />
<path d="M2351 495 H2380" stroke="#777" stroke-width="2" stroke-dasharray="2,3"/>
<path d="M2399 528 V605.6 M2399 549.6 H2432 M2399 605.6 H2432" stroke="#777" stroke-width="2" stroke-dasharray="2,3"/>
<path d="M2897.5 470 V634 M3063.5 470 V634" stroke="#e0e0e0" stroke-width="2" stroke-dasharray="3,4"/>
<text x="2387.7" y="508.4" font-size="34" fill="#9a9a9a" stroke="#9a9a9a" stroke-width="0.25" textLength="117.1" lengthAdjust="spacingAndGlyphs">PV Array</text>
<text x="2439.8" y="563.9" font-size="34" fill="#0c0c28" stroke="#0c0c28" stroke-width="0.25" textLength="443.3" lengthAdjust="spacingAndGlyphs">Jiangsu Linyang - Poly 245 WP 60</text>
<text x="2926.5" y="563.9" font-size="34" fill="#0c0c28" stroke="#0c0c28" stroke-width="0.25" textLength="17.2" lengthAdjust="spacingAndGlyphs">4</text>
<text x="3090.8" y="563.9" font-size="34" fill="#0c0c28" stroke="#0c0c28" stroke-width="0.25" textLength="18.9" lengthAdjust="spacingAndGlyphs">2</text>
<text x="2439.0" y="619.1" font-size="34" fill="#0c0c28" stroke="#0c0c28" stroke-width="0.25" textLength="275.9" lengthAdjust="spacingAndGlyphs">Goodwe - GW700-XS</text>
<text x="2925.5" y="619.1" font-size="34" fill="#0c0c28" stroke="#0c0c28" stroke-width="0.25" textLength="18.2" lengthAdjust="spacingAndGlyphs">2</text>
<text x="3092.7" y="619.1" font-size="34" fill="#0c0c28" stroke="#0c0c28" stroke-width="0.25" textLength="16.9" lengthAdjust="spacingAndGlyphs">1</text>
<rect x="2311.4" y="1396.4" width="920.2" height="581.7" rx="0" fill="#fff" stroke="#ababab" stroke-width="2.8" />
<text x="2353.4" y="1465.6" font-size="38" fill="#333333" stroke="#333333" stroke-width="0.15" font-weight="bold" textLength="419.7" lengthAdjust="spacingAndGlyphs">Global system summary</text>
<rect x="2354.0" y="1499.0" width="832.6" height="3.0" rx="0" fill="#c8c8c8" />
<text x="2352.6" y="1550.6" font-size="34" fill="#00901e" stroke="#00901e" stroke-width="0.25" textLength="200.1" lengthAdjust="spacingAndGlyphs">Nb. of modules</text>
<text x="2792.1" y="1550.6" font-size="34" fill="#00901e" stroke="#00901e" stroke-width="0.25" textLength="16.7" lengthAdjust="spacingAndGlyphs">8</text>
<text x="2352.7" y="1605.3" font-size="34" fill="#00901e" stroke="#00901e" stroke-width="0.25" textLength="162.2" lengthAdjust="spacingAndGlyphs">Module area</text>
<text x="2777.3" y="1605.3" font-size="34" fill="#00901e" stroke="#00901e" stroke-width="0.25" textLength="31.4" lengthAdjust="spacingAndGlyphs">13</text>
<text x="2815.9" y="1605.3" font-size="34" fill="#00901e" stroke="#00901e" stroke-width="0.25" textLength="42.0" lengthAdjust="spacingAndGlyphs">m²</text>
<text x="2352.6" y="1660.0" font-size="34" fill="#00901e" stroke="#00901e" stroke-width="0.25" textLength="211.1" lengthAdjust="spacingAndGlyphs">Nb. of inverters</text>
<text x="2793.2" y="1660.0" font-size="34" fill="#00901e" stroke="#00901e" stroke-width="0.25" textLength="15.6" lengthAdjust="spacingAndGlyphs">2</text>
<text x="2352.8" y="1714.7" font-size="34" fill="#00901e" stroke="#00901e" stroke-width="0.25" textLength="233.5" lengthAdjust="spacingAndGlyphs">Nominal PV Power</text>
<text x="2765.1" y="1714.7" font-size="34" fill="#00901e" stroke="#00901e" stroke-width="0.25" textLength="43.8" lengthAdjust="spacingAndGlyphs">2.0</text>
<text x="2824.2" y="1714.7" font-size="34" fill="#00901e" stroke="#00901e" stroke-width="0.25" textLength="59.5" lengthAdjust="spacingAndGlyphs">kWp</text>
<text x="2352.8" y="1770.0" font-size="34" fill="#00901e" stroke="#00901e" stroke-width="0.25" textLength="252.5" lengthAdjust="spacingAndGlyphs">Maximum PV Power</text>
<text x="2765.7" y="1770.0" font-size="34" fill="#00901e" stroke="#00901e" stroke-width="0.25" textLength="43.2" lengthAdjust="spacingAndGlyphs">1.8</text>
<text x="2824.3" y="1770.0" font-size="34" fill="#00901e" stroke="#00901e" stroke-width="0.25" textLength="81.1" lengthAdjust="spacingAndGlyphs">kWDC</text>
<text x="2352.7" y="1825.0" font-size="34" fill="#00901e" stroke="#00901e" stroke-width="0.25" textLength="239.5" lengthAdjust="spacingAndGlyphs">Nominal AC Power</text>
<text x="2765.7" y="1825.0" font-size="34" fill="#00901e" stroke="#00901e" stroke-width="0.25" textLength="43.2" lengthAdjust="spacingAndGlyphs">1.4</text>
<text x="2824.3" y="1825.0" font-size="34" fill="#00901e" stroke="#00901e" stroke-width="0.25" textLength="81.2" lengthAdjust="spacingAndGlyphs">kWAC</text>
<text x="2352.7" y="1880.3" font-size="34" fill="#00901e" stroke="#00901e" stroke-width="0.25" textLength="140.6" lengthAdjust="spacingAndGlyphs">Pnom ratio</text>
<text x="2733.8" y="1880.3" font-size="34" fill="#00901e" stroke="#00901e" stroke-width="0.25" textLength="75.0" lengthAdjust="spacingAndGlyphs">1.400</text>
<rect x="536.0" y="2002.0" width="3.0" height="109.0" rx="0" fill="#8a8a8a" />
<rect x="60.0" y="2111.0" width="476.0" height="3.0" rx="0" fill="#8a8a8a" />
<rect x="57.0" y="1999.0" width="479.0" height="112.0" rx="0" fill="#a0a0a0" />
<rect x="57.0" y="1999.0" width="476.0" height="109.0" rx="0" fill="#8c8c8c" />
<rect x="60.0" y="2002.0" width="473.0" height="106.0" rx="0" fill="#d9d9d9" />
<circle cx="148" cy="2046" r="21.5" fill="none" stroke="#7a7a7a" stroke-width="7"/>
<line x1="166" y1="2066" x2="185" y2="2088" stroke="#555" stroke-width="10" stroke-linecap="round"/>
<text x="200.7" y="2068.7" font-size="34" fill="#000" stroke="#000" stroke-width="0.15" font-weight="bold" textLength="269.6" lengthAdjust="spacingAndGlyphs">System overview</text>
<rect x="1006.0" y="2002.0" width="3.0" height="109.0" rx="0" fill="#8a8a8a" />
<rect x="557.0" y="2111.0" width="449.0" height="3.0" rx="0" fill="#8a8a8a" />
<rect x="554.0" y="1999.0" width="452.0" height="112.0" rx="0" fill="#a0a0a0" />
<rect x="554.0" y="1999.0" width="449.0" height="109.0" rx="0" fill="#8c8c8c" />
<rect x="557.0" y="2002.0" width="446.0" height="106.0" rx="0" fill="#d9d9d9" />
<circle cx="617" cy="2033" r="9" fill="none" stroke="#333" stroke-width="3"/>
<circle cx="617" cy="2073" r="9" fill="none" stroke="#333" stroke-width="3"/>
<path d="M596 2037 H608 M596 2069 H608 M626 2033 H638 V2073 H626 M638 2053 H657" fill="none" stroke="#333" stroke-width="3"/>
<text x="669.7" y="2068.7" font-size="34" fill="#000" stroke="#000" stroke-width="0.15" font-weight="bold" textLength="303.2" lengthAdjust="spacingAndGlyphs">Single-line diagram</text>
<rect x="2827.0" y="2002.0" width="3.0" height="110.0" rx="0" fill="#8a8a8a" />
<rect x="2446.0" y="2112.0" width="381.0" height="3.0" rx="0" fill="#8a8a8a" />
<rect x="2443.0" y="1999.0" width="384.0" height="113.0" rx="0" fill="#a0a0a0" />
<rect x="2443.0" y="1999.0" width="381.0" height="110.0" rx="0" fill="#8c8c8c" />
<rect x="2446.0" y="2002.0" width="378.0" height="107.0" rx="0" fill="#d9d9d9" />
<path d="M2567 2035 L2606 2079 M2606 2035 L2567 2079" stroke="#ff0000" stroke-width="12" stroke-linecap="round"/>
<text x="2629.9" y="2068.5" font-size="34" fill="#0c0c28" stroke="#0c0c28" stroke-width="0.25" textLength="89.9" lengthAdjust="spacingAndGlyphs">Cancel</text>
<rect x="3230.0" y="2002.0" width="3.0" height="110.0" rx="0" fill="#8a8a8a" />
<rect x="2850.0" y="2112.0" width="380.0" height="3.0" rx="0" fill="#8a8a8a" />
<rect x="2847.0" y="1999.0" width="383.0" height="113.0" rx="0" fill="#a0a0a0" />
<rect x="2847.0" y="1999.0" width="380.0" height="110.0" rx="0" fill="#8c8c8c" />
<rect x="2850.0" y="2002.0" width="377.0" height="107.0" rx="0" fill="#d9d9d9" />
<path d="M2985 2058 L3004 2081 L3044 2030" fill="none" stroke="#5cb83c" stroke-width="11"/>
<text x="3057.2" y="2068.5" font-size="34" fill="#0c0c28" stroke="#0c0c28" stroke-width="0.25" textLength="40.2" lengthAdjust="spacingAndGlyphs">OK</text>
</svg>
</body></html>
